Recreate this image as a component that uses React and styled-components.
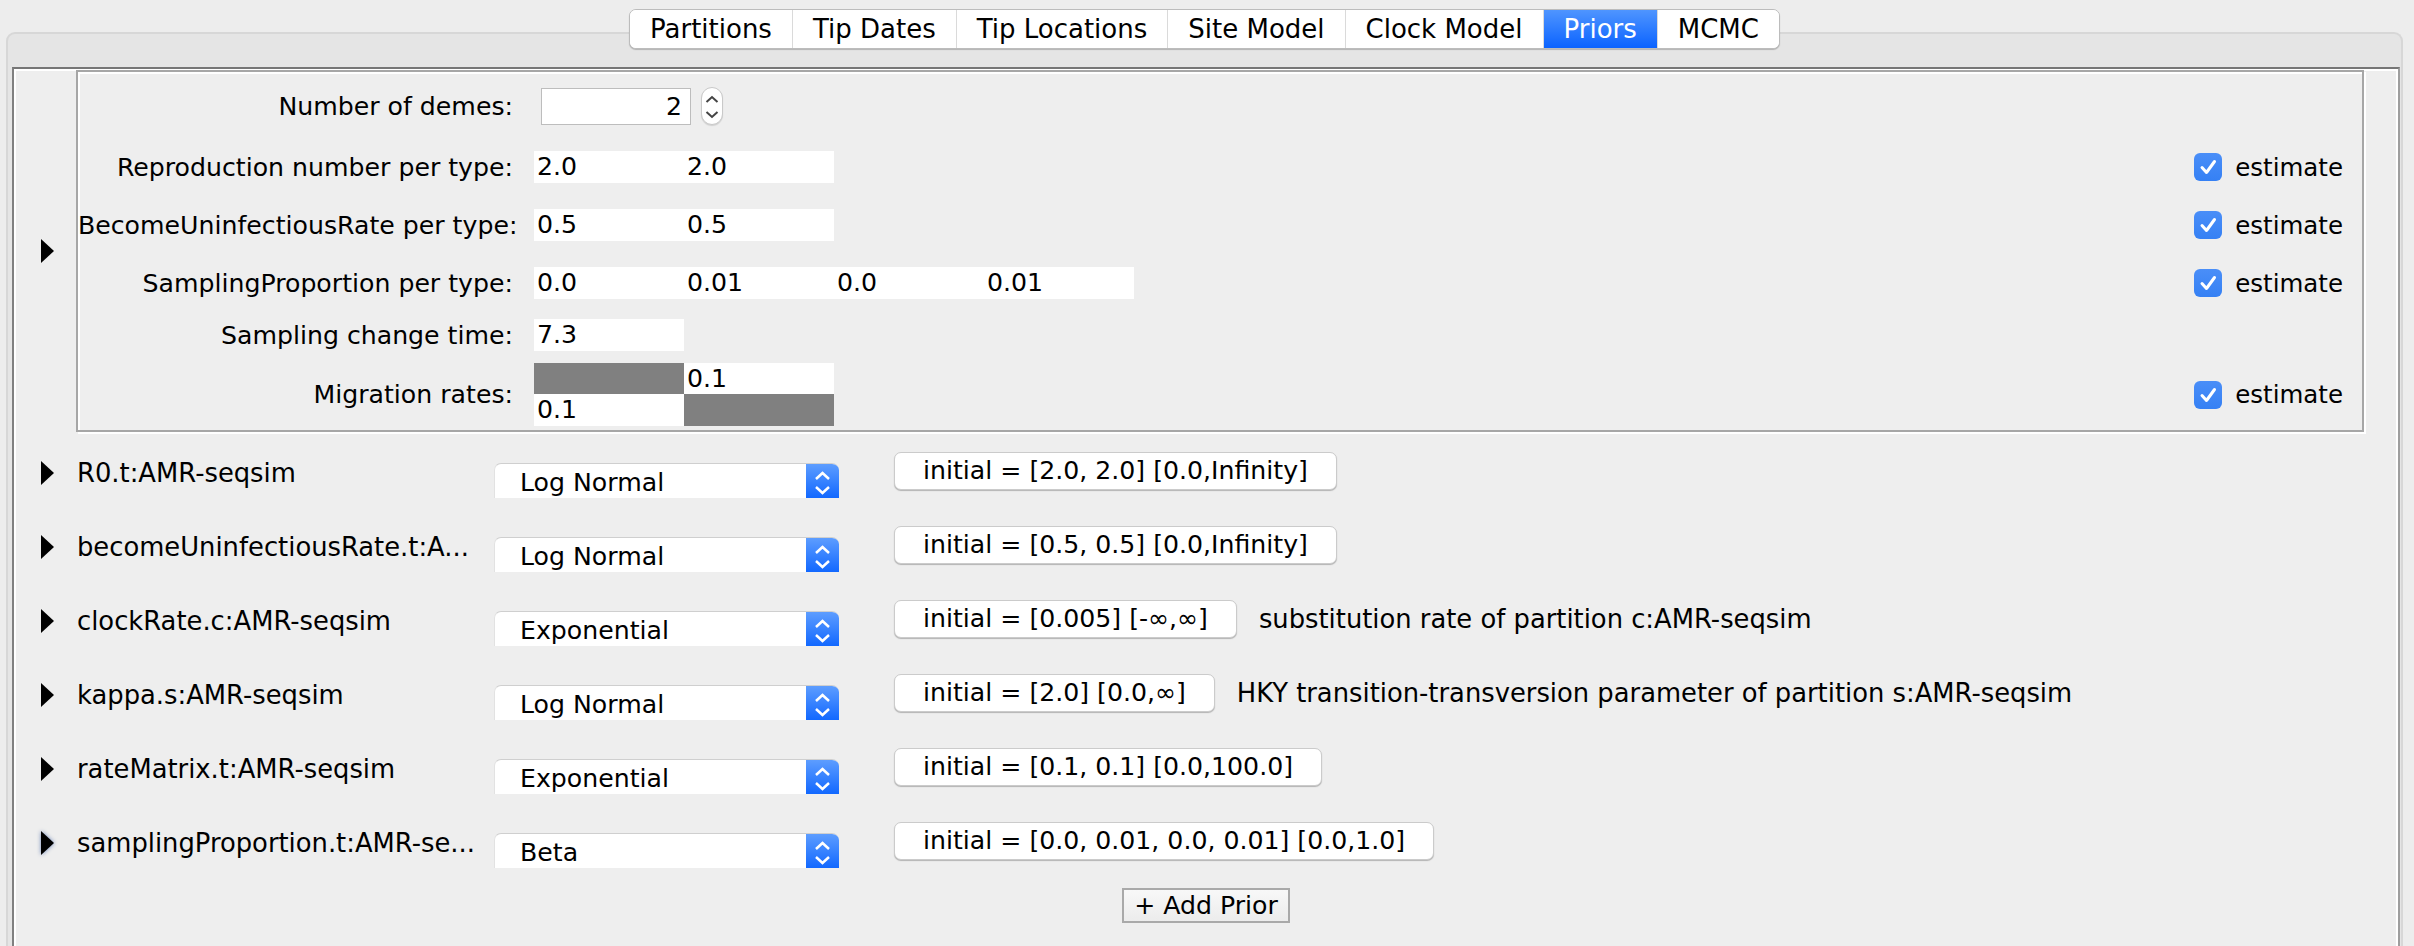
import React from "react";
import styled, { createGlobalStyle } from "styled-components";

const GlobalStyle = createGlobalStyle`
  html, body { margin: 0; padding: 0; }
  body {
    background: #ededed;
    font-family: "DejaVu Sans", "Noto Sans", sans-serif;
    font-size: 25.2px;
    color: #000;
  }
`;

const Window = styled.div`
  width: 2414px;
  height: 946px;
  overflow: hidden;
  box-sizing: border-box;
  padding: 9px 11px 0 6px;
  display: flex;
  flex-direction: column;
`;

const TabStrip = styled.div`
  align-self: center;
  position: relative;
  z-index: 1;
  display: flex;
  height: 40px;
  box-sizing: border-box;
  border: 1px solid #bcbcbc;
  border-radius: 7px;
  background: #fff;
  box-shadow: 0 1px 1px rgba(0, 0, 0, 0.22);
  overflow: hidden;
`;

const Tab = styled.div`
  padding: 0 20px;
  font-size: 26px;
  line-height: 38px;
  white-space: nowrap;
  border-left: ${(p) => (p.first ? "none" : "1px solid #dadada")};
  color: ${(p) => (p.active ? "#fff" : "#000")};
  background: ${(p) => (p.active ? "linear-gradient(#4f95ff, #0b63ff)" : "#fff")};
`;

const Pane = styled.div`
  flex: 1;
  margin-top: -17px;
  display: flex;
  flex-direction: column;
  box-sizing: border-box;
  border: 2px solid #d7d7d7;
  border-bottom: none;
  border-radius: 9px 9px 0 0;
  background: #e5e5e5;
  padding: 33px 1px 0 4px;
`;

const Content = styled.div`
  flex: 1;
  display: flex;
  flex-direction: column;
  background: #eeeeee;
  border-top: 2px solid #767676;
  border-left: 2px solid #808080;
  border-right: 2px solid #9e9e9e;
  box-shadow: inset 2px 2px 0 #fff, inset -2px 0 0 #fff;
  padding-top: 1px;
`;

const DemesRow = styled.div`
  display: flex;
  align-items: center;
  padding: 0 34px 0 26px;
`;

const Expander = styled.svg`
  flex: none;
  margin-top: ${(p) => p.$mt || 0}px;
  filter: ${(p) => (p.$focused ? "drop-shadow(0 0 2px #6d86b8)" : "none")};
`;

const DemesBox = styled.div`
  flex: 1;
  margin-left: 21px;
  height: 362px;
  box-sizing: border-box;
  border: 2px solid #a6a6a6;
  box-shadow: inset 2px 2px 0 #fff, 2px 2px 0 #fff;
  padding: 15px 19px 0 0;
  display: flex;
  flex-direction: column;
`;

const ParamRow = styled.div`
  display: grid;
  grid-template-columns: 435px 1fr auto;
  column-gap: 21px;
  align-items: center;
  margin-top: ${(p) => p.$mt || 0}px;
`;

const ParamLabel = styled.div`
  text-align: right;
  white-space: nowrap;
`;

const CellStrip = styled.div`
  display: flex;
`;

const Cell = styled.div`
  width: 150px;
  height: ${(p) => p.$h || 32}px;
  line-height: ${(p) => p.$h || 32}px;
  box-sizing: border-box;
  padding-left: 3px;
  background: ${(p) => (p.$shade ? "#808080" : "#fff")};
`;

const Matrix = styled.div`
  display: grid;
  grid-template-columns: 150px 150px;
`;

const SpinnerWrap = styled.div`
  display: flex;
  align-items: center;
  gap: 10px;
  padding-left: 7px;
`;

const NumberField = styled.div`
  width: 150px;
  height: 37px;
  box-sizing: border-box;
  border: 1px solid #bdbdbd;
  background: #fff;
  text-align: right;
  padding-right: 8px;
  line-height: 35px;
`;

const SpinnerPill = styled.div`
  width: 22px;
  height: 38px;
  box-sizing: border-box;
  border: 1px solid #c9c9c9;
  border-radius: 11px;
  background: #fff;
  box-shadow: 0 1px 1px rgba(0, 0, 0, 0.12);
  display: flex;
`;

const Estimate = styled.label`
  display: flex;
  align-items: center;
  gap: 13px;
  font-size: 24.5px;
  white-space: nowrap;
`;

const CheckBox = styled.span`
  width: 28px;
  height: 28px;
  border-radius: 6px;
  background: linear-gradient(#4a8ef8, #3580f4);
  display: flex;
  align-items: center;
  justify-content: center;
`;

const PriorList = styled.div`
  display: flex;
  flex-direction: column;
  gap: 36px;
  margin-top: 20px;
  padding-left: 26px;
`;

const PriorRow = styled.div`
  display: flex;
  align-items: flex-start;
  height: 38px;
`;

const PriorName = styled.div`
  width: 417px;
  margin-left: 22px;
  font-size: 25.8px;
  line-height: 42px;
  white-space: nowrap;
`;

const Combo = styled.div`
  flex: none;
  margin-top: 11px;
  width: 345px;
  height: 35px;
  box-sizing: border-box;
  display: flex;
  background: #fff;
  border-top: 1px solid #cfcfcf;
  border-left: 1px solid #e2e2e2;
  border-radius: 7px 7px 0 0;
  overflow: hidden;
`;

const ComboText = styled.div`
  flex: 1;
  padding-left: 25px;
  line-height: 38px;
  white-space: nowrap;
`;

const ComboArrow = styled.div`
  width: 33px;
  background: linear-gradient(#5d9dff, #1268ff);
  display: flex;
`;

const InitButton = styled.div`
  flex: none;
  margin-left: 55px;
  height: 38px;
  box-sizing: border-box;
  padding: 0 28px;
  line-height: 36px;
  white-space: nowrap;
  background: #fff;
  border: 1px solid #cbcbcb;
  border-radius: 7px;
  box-shadow: 0 1px 1px rgba(0, 0, 0, 0.25);
`;

const Description = styled.div`
  margin-left: 22px;
  font-size: 25.8px;
  line-height: 38px;
  white-space: nowrap;
`;

const AddPrior = styled.div`
  align-self: center;
  margin-top: 28px;
  height: 35px;
  box-sizing: border-box;
  padding: 0 10px;
  line-height: 31px;
  white-space: nowrap;
  border: 2px solid #a9a9a9;
  background: linear-gradient(#f8f8f8, #ececec);
`;

const tabs = ["Partitions", "Tip Dates", "Tip Locations", "Site Model", "Clock Model", "Priors", "MCMC"];

const priors = [
  { name: "R0.t:AMR-seqsim", dist: "Log Normal", init: "initial = [2.0, 2.0] [0.0,Infinity]" },
  { name: "becomeUninfectiousRate.t:A...", dist: "Log Normal", init: "initial = [0.5, 0.5] [0.0,Infinity]" },
  {
    name: "clockRate.c:AMR-seqsim",
    dist: "Exponential",
    init: "initial = [0.005] [-∞,∞]",
    desc: "substitution rate of partition c:AMR-seqsim",
  },
  {
    name: "kappa.s:AMR-seqsim",
    dist: "Log Normal",
    init: "initial = [2.0] [0.0,∞]",
    desc: "HKY transition-transversion parameter of partition s:AMR-seqsim",
  },
  { name: "rateMatrix.t:AMR-seqsim", dist: "Exponential", init: "initial = [0.1, 0.1] [0.0,100.0]" },
  {
    name: "samplingProportion.t:AMR-se...",
    dist: "Beta",
    init: "initial = [0.0, 0.01, 0.0, 0.01] [0.0,1.0]",
    focused: true,
  },
];

const Triangle = ({ mt, focused }) => (
  <Expander width="15" height="26" viewBox="0 0 15 26" $mt={mt} $focused={focused}>
    <polygon points="1,1 14,13 1,25" fill="#000" />
  </Expander>
);

const Check = () => (
  <CheckBox>
    <svg width="28" height="28" viewBox="0 0 28 28">
      <polyline points="8,14.5 12.5,19.5 20.5,8.5" fill="none" stroke="#fff" strokeWidth="3" strokeLinecap="round" strokeLinejoin="round" />
    </svg>
  </CheckBox>
);

const EstimateBox = () => (
  <Estimate>
    <Check />
    estimate
  </Estimate>
);

const Cells = ({ values }) => (
  <CellStrip>
    {values.map((v, i) => (
      <Cell key={i}>{v}</Cell>
    ))}
  </CellStrip>
);

const App = () => {
  return (
    <>
      <GlobalStyle />
      <Window>
        <TabStrip>
          {tabs.map((t, i) => (
            <Tab key={t} first={i === 0} active={t === "Priors"}>
              {t}
            </Tab>
          ))}
        </TabStrip>
        <Pane>
          <Content>
            <DemesRow>
              <Triangle />
              <DemesBox>
                <ParamRow>
                  <ParamLabel>Number of demes:</ParamLabel>
                  <SpinnerWrap>
                    <NumberField>2</NumberField>
                    <SpinnerPill>
                      <svg width="20" height="36" viewBox="0 0 20 36">
                        <polyline points="4.5,14 10,9 15.5,14" fill="none" stroke="#444" strokeWidth="2" />
                        <polyline points="4.5,24 10,29 15.5,24" fill="none" stroke="#444" strokeWidth="2" />
                      </svg>
                    </SpinnerPill>
                  </SpinnerWrap>
                  <span />
                </ParamRow>
                <ParamRow $mt={26}>
                  <ParamLabel>Reproduction number per type:</ParamLabel>
                  <Cells values={["2.0", "2.0"]} />
                  <EstimateBox />
                </ParamRow>
                <ParamRow $mt={26}>
                  <ParamLabel>BecomeUninfectiousRate per type:</ParamLabel>
                  <Cells values={["0.5", "0.5"]} />
                  <EstimateBox />
                </ParamRow>
                <ParamRow $mt={26}>
                  <ParamLabel>SamplingProportion per type:</ParamLabel>
                  <Cells values={["0.0", "0.01", "0.0", "0.01"]} />
                  <EstimateBox />
                </ParamRow>
                <ParamRow $mt={20}>
                  <ParamLabel>Sampling change time:</ParamLabel>
                  <Cells values={["7.3"]} />
                  <span />
                </ParamRow>
                <ParamRow $mt={12}>
                  <ParamLabel>Migration rates:</ParamLabel>
                  <Matrix>
                    <Cell $shade $h={31} />
                    <Cell $h={31}>0.1</Cell>
                    <Cell $h={32}>0.1</Cell>
                    <Cell $shade $h={32} />
                  </Matrix>
                  <EstimateBox />
                </ParamRow>
              </DemesBox>
            </DemesRow>

            <PriorList>
              {priors.map((p) => (
                <PriorRow key={p.name}>
                  <Triangle mt={8} focused={p.focused} />
                  <PriorName>{p.name}</PriorName>
                  <Combo>
                    <ComboText>{p.dist}</ComboText>
                    <ComboArrow>
                      <svg width="33" height="35" viewBox="0 0 33 35">
                        <polyline points="10,15 16.5,9 23,15" fill="none" stroke="#fff" strokeWidth="2.5" />
                        <polyline points="10,23 16.5,29 23,23" fill="none" stroke="#fff" strokeWidth="2.5" />
                      </svg>
                    </ComboArrow>
                  </Combo>
                  <InitButton>{p.init}</InitButton>
                  {p.desc && <Description>{p.desc}</Description>}
                </PriorRow>
              ))}
            </PriorList>
            <AddPrior>+ Add Prior</AddPrior>
          </Content>
        </Pane>
      </Window>
    </>
  );
};

export default App;
